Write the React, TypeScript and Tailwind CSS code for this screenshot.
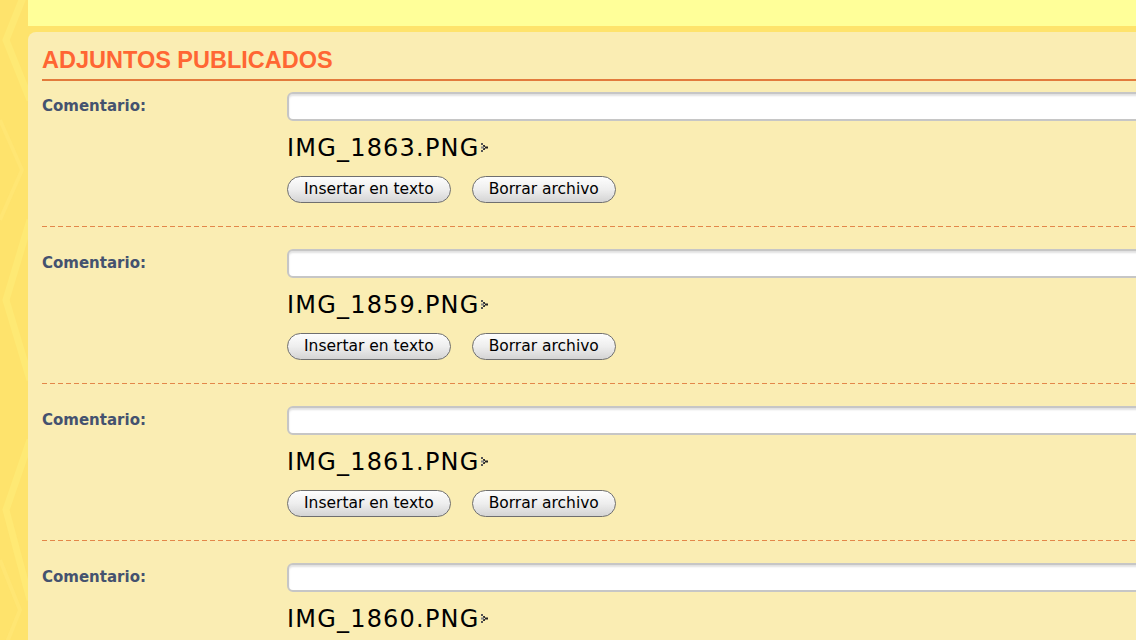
import React from "react";

const files = ["IMG_1863.PNG", "IMG_1859.PNG", "IMG_1861.PNG", "IMG_1860.PNG"];

function LinkArrow() {
  return (
    <svg width="8" height="9" viewBox="0 0 8 9" className="ml-[1px] inline-block">
      <rect x="0" y="0" width="2" height="2" fill="#555" />
      <rect x="2" y="2" width="2" height="2" fill="#333" />
      <rect x="4" y="3.5" width="3" height="2" fill="#222" />
      <rect x="2" y="5" width="2" height="2" fill="#333" />
      <rect x="0" y="7" width="2" height="2" fill="#555" />
      <rect x="0" y="3.5" width="3" height="2" fill="#888" />
    </svg>
  );
}

function PillButton({ label }: { label: string }) {
  return (
    <button
      type="button"
      className="h-[27px] rounded-full border border-[#6f6f6f] bg-gradient-to-b from-[#fdfdfd] via-[#eeeeee] to-[#d4d4d4] px-[16px] pt-[2px] text-[15.5px] leading-none text-black"
      style={{ fontFamily: '"DejaVu Sans", Verdana, sans-serif' }}
    >
      {label}
    </button>
  );
}

function Attachment({ name }: { name: string }) {
  return (
    <div className="flex">
      <div
        className="w-[245px] shrink-0 pt-[3px] text-[15px] font-bold text-[#44526f]"
        style={{ fontFamily: '"DejaVu Sans", Verdana, sans-serif' }}
      >
        Comentario:
      </div>
      <div className="flex flex-1 flex-col">
        <input
          type="text"
          className="h-[29px] w-full rounded-[6px] border-2 border-[#c6c6c6] bg-white shadow-[inset_0_2px_2px_rgba(0,0,0,0.12)] outline-none"
        />
        <div
          className="mt-[13px] flex h-[28px] items-center text-[24px] leading-[28px] tracking-[1.2px] text-black"
          style={{ fontFamily: '"DejaVu Sans", Verdana, sans-serif' }}
        >
          <span>{name}</span>
          <LinkArrow />
        </div>
        <div className="mt-[14px] flex gap-[21px]">
          <PillButton label="Insertar en texto" />
          <PillButton label="Borrar archivo" />
        </div>
      </div>
    </div>
  );
}

export default function App() {
  return (
    <div className="relative h-[640px] w-[1136px] overflow-hidden bg-[#fee36c]">
      {/* chevron texture down the left edge */}
      <svg className="pointer-events-none absolute left-0 top-0" width="28" height="640">
        <g fill="none" stroke="#fff07c" strokeWidth="7" opacity="0.5">
          <polyline points="30,-20 6,40 30,100" />
          <polyline points="30,220 6,300 30,380" />
          <polyline points="30,440 6,510 30,600" />
        </g>
        <g fill="none" stroke="#ffe97a" strokeWidth="4" opacity="0.5">
          <polyline points="0,120 22,170 0,220" />
          <polyline points="0,560 20,610 0,660" />
        </g>
      </svg>

      <div className="relative ml-[28px] flex flex-col">
        <div className="h-[26px] bg-[#ffff99]" />
        <div className="mt-[6px] w-[1180px] rounded-tl-[8px] bg-[#faedb3] px-[14px] pt-[17px]">
          <h2
            className="border-b-2 border-[#e27b3c] pb-[6px] text-[23.5px] font-bold leading-none text-[#ff6633]"
            style={{ fontFamily: '"Liberation Sans", Arial, sans-serif' }}
          >
            ADJUNTOS PUBLICADOS
          </h2>
          <div className="mt-[11px] flex flex-col">
            {files.map((f, i) => (
              <div key={f} className="flex flex-col">
                {i > 0 && (
                  <div className="mb-[22px] mt-[23px] h-px bg-[repeating-linear-gradient(to_right,#e3874a_0_5px,transparent_5px_8px)]" />
                )}
                <Attachment name={f} />
              </div>
            ))}
          </div>
        </div>
      </div>
    </div>
  );
}
